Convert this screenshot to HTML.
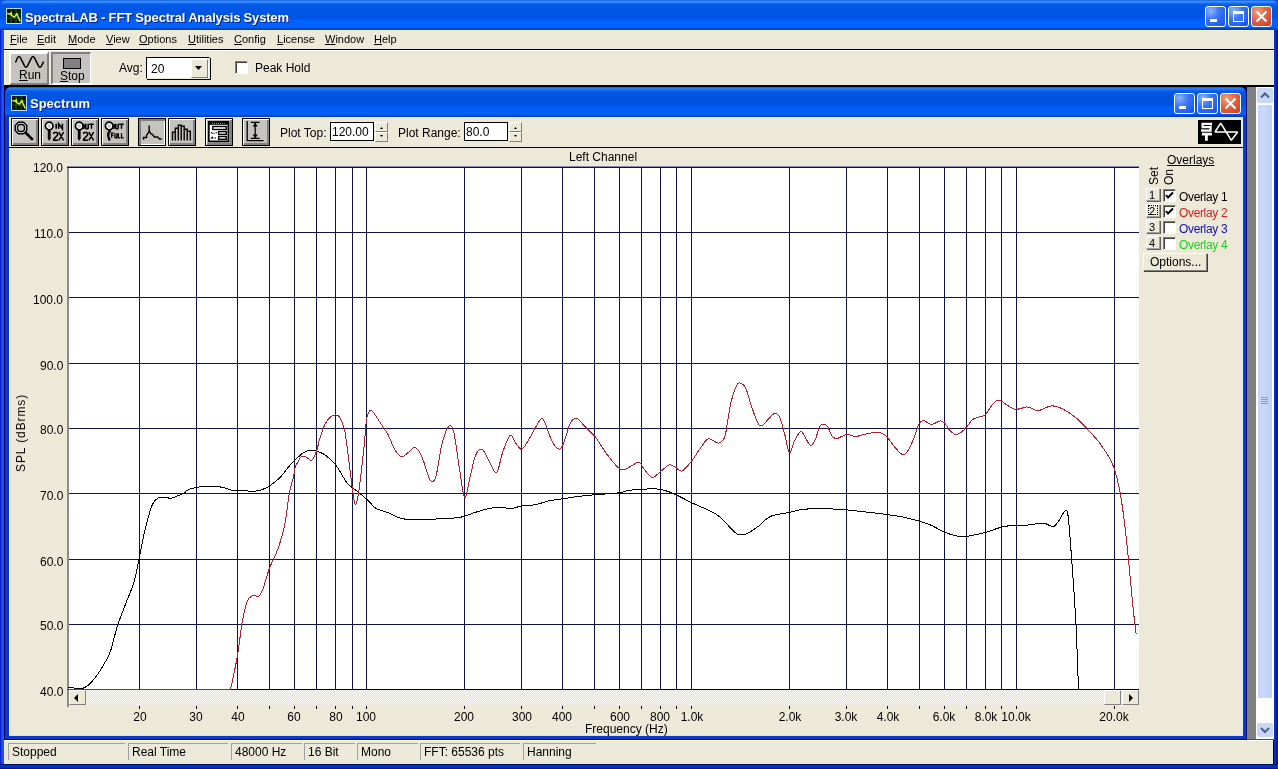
<!DOCTYPE html>
<html><head><meta charset="utf-8"><style>
*{margin:0;padding:0;box-sizing:border-box}
html,body{width:1278px;height:769px;overflow:hidden}
body{position:relative;background:#0A55E6;font-family:"Liberation Sans",sans-serif;font-size:12px;color:#000}
.a{position:absolute}
.t{position:absolute;white-space:nowrap;line-height:1;will-change:transform}
</style></head><body>
<div class="a" style="left:0;top:0;width:1278px;height:30px;border-radius:7px 7px 0 0;background:linear-gradient(#0047D5 0px,#3D95FF 1px,#3A8FFF 2px,#1C74F4 3px,#0A62E8 4px,#0058E6 6px,#0054E3 17px,#0058EE 19px,#0062FF 21px,#0064FF 27px,#0055EA 28px,#003DC0 29px,#003DC0 30px)"></div>
<div class="a" style="left:0;top:30px;width:4px;height:739px;background:linear-gradient(90deg,#0020C8 0,#0828D8 1px,#2A5AF0 2px,#2050E0 3px,#2050E0 4px)"></div>
<div class="a" style="left:1274px;top:30px;width:4px;height:739px;background:linear-gradient(90deg,#0030D0 0,#0030D0 2px,#001890 2px,#001890 4px)"></div>
<div class="a" style="left:0;top:764px;width:1278px;height:5px;background:linear-gradient(#001060 0,#001060 1px,#0030C0 1px,#0030C0 4px,#001890 4px)"></div>
<svg class="a" style="left:6px;top:8px" width="16" height="16" viewBox="0 0 16 16"><rect x="0" y="0" width="16" height="16" fill="#B8D8FF"/><rect x="1" y="1" width="14" height="14" fill="#061806"/><path d="M1,6 H15 M1,10 H15 M5,1 V15 M10,1 V15" stroke="#1F5A10" stroke-width="1"/><path d="M1.3,5.4 L3.9,6.2 L5.2,4.9 L5.4,7.3 L8.3,9.1 L10.9,5.7 L11.9,8.3 L14.3,13.5" stroke="#E0F040" stroke-width="1.5" fill="none"/></svg>
<div class="t" style="left:25px;top:11px;font-size:13px;letter-spacing:-0.18px;font-weight:bold;color:#fff;text-shadow:1px 1px 0 #0A1E7A">SpectraLAB - FFT Spectral Analysis System</div>
<div class="a" style="left:1205px;top:6px;width:21px;height:21px;border:1px solid #fff;border-radius:3px;background:radial-gradient(circle at 25% 20%,#8CB4FF 0%,#3C78F4 40%,#1F5DEB 80%,#1848D0 100%)"></div><div class="a" style="left:1210px;top:19px;width:7px;height:3px;background:#fff"></div>
<div class="a" style="left:1228px;top:6px;width:21px;height:21px;border:1px solid #fff;border-radius:3px;background:radial-gradient(circle at 25% 20%,#8CB4FF 0%,#3C78F4 40%,#1F5DEB 80%,#1848D0 100%)"></div><div class="a" style="left:1233px;top:11px;width:11px;height:11px;border:1px solid #fff;border-top-width:3px"></div>
<div class="a" style="left:1251px;top:6px;width:21px;height:21px;border:1px solid #fff;border-radius:3px;background:radial-gradient(circle at 30% 25%,#F4A07E 0%,#E2623F 45%,#C8401F 100%)"></div><svg class="a" style="left:1251px;top:6px" width="21" height="21"><path d="M5.5,5.5 L15.5,15.5 M15.5,5.5 L5.5,15.5" stroke="#fff" stroke-width="2"/></svg>
<div class="a" style="left:4px;top:30px;width:1270px;height:19px;background:#ECE9D8;border-top:1px solid #F4F3EC"></div>
<div class="a" style="left:4px;top:49px;width:1270px;height:1px;background:#000"></div>
<div class="t" style="left:10px;top:34px;font-size:11px"><u>F</u>ile</div>
<div class="t" style="left:37px;top:34px;font-size:11px"><u>E</u>dit</div>
<div class="t" style="left:68px;top:34px;font-size:11px"><u>M</u>ode</div>
<div class="t" style="left:106px;top:34px;font-size:11px"><u>V</u>iew</div>
<div class="t" style="left:139px;top:34px;font-size:11px"><u>O</u>ptions</div>
<div class="t" style="left:188px;top:34px;font-size:11px"><u>U</u>tilities</div>
<div class="t" style="left:234px;top:34px;font-size:11px"><u>C</u>onfig</div>
<div class="t" style="left:277px;top:34px;font-size:11px"><u>L</u>icense</div>
<div class="t" style="left:325px;top:34px;font-size:11px"><u>W</u>indow</div>
<div class="t" style="left:374px;top:34px;font-size:11px"><u>H</u>elp</div>
<div class="a" style="left:4px;top:50px;width:1270px;height:35px;background:#ECE9D8;border-top:1px solid #fff;border-left:1px solid #fff"></div>
<div class="a" style="left:4px;top:85px;width:1270px;height:2px;background:#000"></div>
<div class="a" style="left:9px;top:51px;width:40px;height:34px;background:#C4C3BE;border-top:3px solid #fff;border-left:2px solid #fff;border-bottom:2px solid #808080;border-right:2px solid #808080"></div>
<svg class="a" style="left:0;top:0" width="50" height="70"><path d="M15.5,62.5 L17.5,57.8 Q19,55.2 20.5,57.8 L24.5,65.8 Q26,68.6 27.5,65.8 L31.5,57.8 Q33,55.2 34.5,57.8 L38.5,65.8 Q40,68.6 41.5,65.8 L43.6,61.6" stroke="#000" stroke-width="1.5" fill="none"/></svg>
<div class="t" style="left:19px;top:69px;font-size:12px"><u>R</u>un</div>
<div class="a" style="left:51px;top:52px;width:40px;height:33px;background:#C4C3BE;border-top:2px solid #808080;border-left:2px solid #808080;border-bottom:2px solid #fff;border-right:1px solid #fff"></div>
<div class="a" style="left:63px;top:58px;width:18px;height:11px;background:#808080;border:1px solid #000"></div>
<div class="t" style="left:60px;top:70px;font-size:12px"><u>S</u>top</div>
<div class="t" style="left:119px;top:62px;font-size:12px">Avg:</div>
<div class="a" style="left:146px;top:57px;width:64px;height:22px;background:#fff;border:1px solid #000;border-right-color:#ECE9D8;border-bottom-color:#ECE9D8;box-shadow:1px 1px 0 #000"></div>
<div class="t" style="left:151px;top:63px;font-size:12px">20</div>
<div class="a" style="left:191px;top:59px;width:17px;height:19px;background:#ECE9D8;border-top:1px solid #fff;border-left:1px solid #fff;border-bottom:1px solid #808080;border-right:1px solid #808080"></div>
<svg class="a" style="left:195px;top:66px" width="9" height="6"><path d="M0,0 H7 L3.5,4 Z" fill="#000"/></svg>
<div class="a" style="left:235px;top:61px;width:13px;height:13px;background:#fff;border-top:1px solid #808080;border-left:1px solid #808080;border-bottom:1px solid #fff;border-right:1px solid #fff;box-shadow:inset 1px 1px 0 #404040"></div>
<div class="t" style="left:255px;top:62px;font-size:12px">Peak Hold</div>
<div class="a" style="left:4px;top:87px;width:1270px;height:652px;background:#808080;border-left:1px solid #000040"></div>
<div class="a" style="left:4px;top:87px;width:1243px;height:10px;background:#000040"></div>
<div class="a" style="left:5px;top:87px;width:1242px;height:653px;background:#0A38C8;border-radius:7px 7px 0 0;border-right:1px solid #001070;border-bottom:1px solid #000060"></div>
<div class="a" style="left:4px;top:87px;width:1px;height:653px;background:#000060"></div>
<div class="a" style="left:5px;top:87px;width:1241px;height:30px;border-radius:6px 6px 0 0;background:linear-gradient(#0A50E0 0px,#2C7CF8 1px,#2A78F4 2px,#1C6CF0 3px,#0A5EE8 4px,#0056E4 6px,#0052E0 17px,#0056EA 19px,#005EF8 21px,#0060FA 27px,#0050E0 28px,#0040C0 29px,#0040C0 30px)"></div>
<svg class="a" style="left:11px;top:95px" width="16" height="16" viewBox="0 0 16 16"><rect x="0" y="0" width="16" height="16" fill="#B8D8FF"/><rect x="1" y="1" width="14" height="14" fill="#061806"/><path d="M1,6 H15 M1,10 H15 M5,1 V15 M10,1 V15" stroke="#1F5A10" stroke-width="1"/><path d="M1.3,5.4 L3.9,6.2 L5.2,4.9 L5.4,7.3 L8.3,9.1 L10.9,5.7 L11.9,8.3 L14.3,13.5" stroke="#E0F040" stroke-width="1.5" fill="none"/></svg>
<div class="t" style="left:30px;top:97px;font-size:13px;font-weight:bold;color:#fff;text-shadow:1px 1px 0 #0A1E7A">Spectrum</div>
<div class="a" style="left:1174px;top:93px;width:21px;height:21px;border:1px solid #fff;border-radius:3px;background:radial-gradient(circle at 25% 20%,#8CB4FF 0%,#3C78F4 40%,#1F5DEB 80%,#1848D0 100%)"></div><div class="a" style="left:1179px;top:106px;width:7px;height:3px;background:#fff"></div>
<div class="a" style="left:1197px;top:93px;width:21px;height:21px;border:1px solid #fff;border-radius:3px;background:radial-gradient(circle at 25% 20%,#8CB4FF 0%,#3C78F4 40%,#1F5DEB 80%,#1848D0 100%)"></div><div class="a" style="left:1202px;top:98px;width:11px;height:11px;border:1px solid #fff;border-top-width:3px"></div>
<div class="a" style="left:1220px;top:93px;width:21px;height:21px;border:1px solid #fff;border-radius:3px;background:radial-gradient(circle at 30% 25%,#F4A07E 0%,#E2623F 45%,#C8401F 100%)"></div><svg class="a" style="left:1220px;top:93px" width="21" height="21"><path d="M5.5,5.5 L15.5,15.5 M15.5,5.5 L5.5,15.5" stroke="#fff" stroke-width="2"/></svg>
<div class="a" style="left:9px;top:117px;width:1234px;height:619px;background:#ECE9D8;border-left:1px solid #E0F0FF;border-right:1px solid #E0F0FF;border-bottom:1px solid #D0E0F0"></div>
<div class="a" style="left:9px;top:147px;width:1234px;height:1px;background:#000"></div>
<div class="a" style="left:11px;top:118px;width:28px;height:28px;border:1px solid #000;background:#C4C3BE;box-shadow:inset 1px 1px 0 #fff,inset -2px -2px 0 #808080"></div>
<div class="a" style="left:41px;top:118px;width:28px;height:28px;border:1px solid #000;background:#C4C3BE;box-shadow:inset 1px 1px 0 #fff,inset -2px -2px 0 #808080"></div>
<div class="a" style="left:71px;top:118px;width:28px;height:28px;border:1px solid #000;background:#C4C3BE;box-shadow:inset 1px 1px 0 #fff,inset -2px -2px 0 #808080"></div>
<div class="a" style="left:101px;top:118px;width:28px;height:28px;border:1px solid #000;background:#C4C3BE;box-shadow:inset 1px 1px 0 #fff,inset -2px -2px 0 #808080"></div>
<div class="a" style="left:168px;top:118px;width:28px;height:28px;border:1px solid #000;background:#C4C3BE;box-shadow:inset 1px 1px 0 #fff,inset -2px -2px 0 #808080"></div>
<div class="a" style="left:205px;top:118px;width:28px;height:28px;border:1px solid #000;background:#C4C3BE;box-shadow:inset 1px 1px 0 #fff,inset -2px -2px 0 #808080"></div>
<div class="a" style="left:242px;top:118px;width:28px;height:28px;border:1px solid #000;background:#C4C3BE;box-shadow:inset 1px 1px 0 #fff,inset -2px -2px 0 #808080"></div>
<div class="a" style="left:138px;top:118px;width:28px;height:28px;border:1px solid #000;background:#C4C3BE;box-shadow:inset 2px 2px 0 #808080,inset -1px -1px 0 #fff"></div>
<svg class="a" style="left:11px;top:118px" width="28" height="28"><path d="M7.5,4.3 H12.5 L15.7,7.5 V12.5 L12.5,15.7 H7.5 L4.3,12.5 V7.5Z" fill="#fff" stroke="#000" stroke-width="1.5"/><path d="M8.3,6.5 H11.7 L13.5,8.3 V11.7 L11.7,13.5 H8.3 L6.5,11.7 V8.3Z" fill="#C4C3BE" stroke="#000" stroke-width="1.4"/><path d="M14.5,14.5 L21.8,21.8" stroke="#000" stroke-width="2.6"/></svg>
<svg class="a" style="left:41px;top:118px" width="28" height="28"><circle cx="8.2" cy="8" r="3.8" fill="#fff" stroke="#000" stroke-width="1.7"/><circle cx="8.2" cy="8" r="1.9" fill="#C8C8C8"/><path d="M6.8,12 H9.6 V20.5 L8.2,23 L6.8,20.5Z" fill="#000"/><path d="M15.2,5.8 V10.8 M17.6,10.8 V5.8 L21.4,10.8 V5.8" stroke="#000" stroke-width="1.6" fill="none"/><path d="M12.2,15.8 L13.4,14.4 H15.6 L16.6,15.6 V17 L12.6,21.4 V22.2 H17 M17.8,14.2 L22.6,22.4 M22.6,14.2 L17.8,22.4" stroke="#000" stroke-width="1.5" fill="none"/></svg>
<svg class="a" style="left:71px;top:118px" width="28" height="28"><circle cx="8.2" cy="8" r="3.8" fill="#fff" stroke="#000" stroke-width="1.7"/><circle cx="8.2" cy="8" r="1.9" fill="#C8C8C8"/><path d="M6.8,12 H9.6 V20.5 L8.2,23 L6.8,20.5Z" fill="#000"/><path d="M11.6,6.6 H12.8 L13.2,7 V9.8 L12.8,10.3 H11.6 M14.8,5.8 V10.2 L15.3,10.7 H16.7 L17.2,10.2 V5.8 M18.2,6.2 H22.8 M20.5,6.2 V10.8" stroke="#000" stroke-width="1.5" fill="none"/><path d="M12.2,15.8 L13.4,14.4 H15.6 L16.6,15.6 V17 L12.6,21.4 V22.2 H17 M17.8,14.2 L22.6,22.4 M22.6,14.2 L17.8,22.4" stroke="#000" stroke-width="1.5" fill="none"/></svg>
<svg class="a" style="left:101px;top:118px" width="28" height="28"><circle cx="8.2" cy="8" r="3.8" fill="#fff" stroke="#000" stroke-width="1.7"/><circle cx="8.2" cy="8" r="1.9" fill="#C8C8C8"/><path d="M9.6,12.4 Q6.6,14.5 7.4,18.5 L8.6,22.5" stroke="#000" stroke-width="2.4" fill="none"/><path d="M11.6,6.6 H12.8 L13.2,7 V9.8 L12.8,10.3 H11.6 M14.8,5.8 V10.2 L15.3,10.7 H16.7 L17.2,10.2 V5.8 M18.2,6.2 H22.8 M20.5,6.2 V10.8" stroke="#000" stroke-width="1.5" fill="none"/><path d="M10.6,19.8 V15.2 H12.8 M10.6,17.3 H12.4 M13.9,15.2 V19.4 L14.3,19.8 H15.5 L15.9,19.4 V15.2 M17.3,15.2 V19.8 H19.3 M20.5,15.2 V19.8 H22.8" stroke="#000" stroke-width="1.3" fill="none"/></svg>
<svg class="a" style="left:138px;top:118px" width="28" height="28"><path d="M5.5,21.8 V19.5 H8.5 V17.5 L10.2,14.8 L11.2,12.8 V7.6 M11.2,12.5 L12.6,15.5 L14.6,16.6 L16.4,19 H19.6 L21.6,21 H23.6" stroke="#000" stroke-width="1.4" fill="none"/></svg>
<svg class="a" style="left:168px;top:118px" width="28" height="28"><path d="M4.5,22.5 V14.3 H7.3 V10.3 H10.3 V7.3 H13.2 V8.2 H16.2 V11.3 H19.2 V13.1 H22.3 V22.5 M7.3,10.3 V22.5 M10.3,7.3 V22.5 M13.2,8.2 V22.5 M16.2,11.3 V22.5 M19.2,13.1 V22.5" stroke="#000" stroke-width="1.4" fill="none"/></svg>
<svg class="a" style="left:205px;top:118px" width="28" height="28"><rect x="3.8" y="3.8" width="19.6" height="19.6" fill="#fff" stroke="#000" stroke-width="1.8"/><rect x="3.8" y="3.8" width="19.6" height="3" fill="#000"/><path d="M7,5.3 H19.5" stroke="#aaa" stroke-width="1" stroke-dasharray="1,1"/><rect x="7.8" y="8.5" width="13.4" height="3" fill="#fff" stroke="#000" stroke-width="1.4"/><rect x="13.6" y="13.6" width="7.6" height="2.8" fill="#fff" stroke="#000" stroke-width="1.4"/><rect x="13.6" y="18.5" width="7.6" height="2.8" fill="#fff" stroke="#000" stroke-width="1.4"/><path d="M6.2,14.2 L7.6,15.6 M9,14.8 V15.8 M10.6,14.6 H11.8 M6.2,20.6 L7.2,19.2 L8.2,20.6 M10.2,19.2 V20.8" stroke="#000" stroke-width="1.1" fill="none"/></svg>
<svg class="a" style="left:242px;top:118px" width="28" height="28"><path d="M5.2,3 V22.6 H21.6 M8.8,4.4 H17.6 M8.8,20.4 H17.6 M13.2,5 V20" stroke="#000" stroke-width="1.3" fill="none"/><path d="M10.6,8.6 L13.2,4.8 L15.8,8.6Z M10.6,16.4 L13.2,20.2 L15.8,16.4Z" fill="#000"/></svg>

<div class="t" style="left:280px;top:127px;font-size:12px">Plot Top:</div>
<div class="a" style="left:330px;top:122px;width:44px;height:19px;background:#fff;border:1px solid #000"></div>
<div class="t" style="left:332px;top:126px;font-size:12px">120.00</div>
<div class="a" style="left:375px;top:122px;width:13px;height:10px;background:#ECE9D8;border-top:1px solid #fff;border-left:1px solid #fff;border-bottom:1px solid #808080;border-right:1px solid #808080"></div><div class="a" style="left:375px;top:132px;width:13px;height:10px;background:#ECE9D8;border-top:1px solid #fff;border-left:1px solid #fff;border-bottom:1px solid #808080;border-right:1px solid #808080"></div><svg class="a" style="left:375px;top:124px" width="13" height="18"><path d="M5,5 L6.5,3 L8,5Z M5,11 H8 L6.5,13Z" fill="#000"/></svg>
<div class="t" style="left:398px;top:127px;font-size:12px">Plot Range:</div>
<div class="a" style="left:464px;top:122px;width:44px;height:19px;background:#fff;border:1px solid #000"></div>
<div class="t" style="left:466px;top:126px;font-size:12px">80.0</div>
<div class="a" style="left:509px;top:122px;width:13px;height:10px;background:#ECE9D8;border-top:1px solid #fff;border-left:1px solid #fff;border-bottom:1px solid #808080;border-right:1px solid #808080"></div><div class="a" style="left:509px;top:132px;width:13px;height:10px;background:#ECE9D8;border-top:1px solid #fff;border-left:1px solid #fff;border-bottom:1px solid #808080;border-right:1px solid #808080"></div><svg class="a" style="left:509px;top:124px" width="13" height="18"><path d="M5,5 L6.5,3 L8,5Z M5,11 H8 L6.5,13Z" fill="#000"/></svg>
<svg class="a" style="left:1198px;top:120px" width="43" height="24"><rect width="43" height="24" fill="#000"/><path d="M13,5.4 V3.8 H4.6 V7.2 H12.6 V10.6 H4.2 V9.2" stroke="#fff" stroke-width="2.2" fill="none"/><path d="M3.9,14.2 H13.9 M8.4,14.2 V20.8" stroke="#fff" stroke-width="2.8" fill="none"/><path d="M17,12 L22.7,3.2 L28.2,12 L33.3,20.3 L39.7,12 Z" stroke="#fff" stroke-width="1.5" fill="none" stroke-linejoin="bevel"/></svg>
<svg class="a" style="left:0;top:0" width="1278" height="769" viewBox="0 0 1278 769"><rect x="69" y="167" width="1070" height="522" fill="#fff"/><path d="M139.5,167V689M196.5,167V689M237.5,167V689M269.5,167V689M294.5,167V689M316.5,167V689M335.5,167V689M352.5,167V689M366.5,167V689M464.5,167V689M521.5,167V689M562.5,167V689M594.5,167V689M619.5,167V689M641.5,167V689M660.5,167V689M676.5,167V689M691.5,167V689M789.5,167V689M846.5,167V689M887.5,167V689M919.5,167V689M944.5,167V689M966.5,167V689M985.5,167V689M1001.5,167V689M1016.5,167V689M1114.5,167V689M69,232.5H1139M69,297.5H1139M69,363.5H1139M69,428.5H1139M69,493.5H1139M69,559.5H1139M69,624.5H1139" stroke="#12124A" stroke-width="1" fill="none"/><path d="M139.5,706V709M196.5,706V709M237.5,706V709M269.5,706V709M294.5,706V709M316.5,706V709M335.5,706V709M352.5,706V709M366.5,706V709M464.5,706V709M521.5,706V709M562.5,706V709M594.5,706V709M619.5,706V709M641.5,706V709M660.5,706V709M676.5,706V709M691.5,706V709M789.5,706V709M846.5,706V709M887.5,706V709M919.5,706V709M944.5,706V709M966.5,706V709M985.5,706V709M1001.5,706V709M1016.5,706V709M1114.5,706V709" stroke="#000" stroke-width="1"/><rect x="67" y="167" width="2" height="540" fill="#8C8A84"/><rect x="67" y="166" width="1072" height="1" fill="#8888B0"/><rect x="67" y="167" width="1072" height="1" fill="#10105A"/><rect x="69" y="689" width="1070" height="1" fill="#000"/><path d="M67.9,687.2C68.9,687.3 71.6,687.7 73.8,688.0C76.0,688.3 78.7,689.4 81.1,688.9C83.5,688.4 85.7,687.4 88.4,685.1C91.1,682.8 94.5,678.5 97.2,674.9C99.9,671.2 102.3,667.1 104.5,663.2C106.7,659.3 108.2,657.8 110.4,651.4C112.6,645.0 115.0,633.4 117.7,625.1C120.4,616.8 123.8,608.8 126.5,601.7C129.2,594.6 131.7,589.8 133.8,582.7C135.9,575.6 137.3,567.3 139.0,559.3C140.7,551.2 142.4,541.5 144.0,534.4C145.6,527.3 146.9,521.9 148.4,516.8C149.9,511.7 151.1,506.9 152.8,503.7C154.5,500.5 156.4,498.9 158.6,497.8C160.8,496.7 164.0,497.1 166.0,497.2C168.0,497.3 168.5,498.6 170.4,498.4C172.3,498.2 175.3,496.7 177.7,495.8C180.1,494.9 183.4,493.7 185.0,492.8C186.6,491.9 185.1,491.2 187.0,490.3C188.9,489.4 193.3,488.0 196.4,487.4C199.5,486.8 202.5,486.6 205.8,486.4C209.1,486.2 213.2,486.1 216.3,486.4C219.4,486.6 221.8,487.2 224.5,487.9C227.2,488.5 229.2,489.8 232.7,490.3C236.2,490.8 241.9,490.8 245.6,490.9C249.3,491.0 252.2,491.3 254.9,491.1C257.6,490.9 259.5,490.6 261.9,489.7C264.3,488.8 266.6,487.9 269.5,486.0C272.4,484.1 276.9,480.5 279.5,478.0C282.1,475.5 283.4,473.4 285.3,471.0C287.2,468.6 289.2,466.0 291.2,463.9C293.2,461.8 295.0,460.1 297.1,458.1C299.2,456.2 301.6,453.5 304.1,452.2C306.6,450.9 309.9,450.2 312.3,450.1C314.7,450.0 316.4,450.9 318.5,451.7C320.6,452.5 322.4,453.0 325.2,455.1C328.0,457.2 331.7,459.8 335.4,464.4C339.1,469.0 343.5,478.5 347.2,483.0C350.9,487.5 354.0,488.7 357.4,491.5C360.8,494.3 364.4,497.1 367.5,499.9C370.6,502.7 372.6,506.3 376.0,508.4C379.4,510.5 382.7,510.8 387.8,512.6C392.9,514.4 396.0,518.5 406.4,519.4C416.8,520.3 440.4,518.8 450.0,518.3C459.6,517.8 459.8,517.4 463.7,516.5C467.6,515.6 469.9,514.1 473.7,512.9C477.5,511.7 482.5,510.1 486.4,509.2C490.3,508.3 493.1,507.5 497.3,507.4C501.6,507.2 507.6,508.6 511.9,508.3C516.1,508.0 518.9,506.2 522.8,505.6C526.7,505.0 531.2,505.5 535.5,504.7C539.8,503.9 543.7,502.0 548.3,501.0C552.9,500.0 558.0,499.6 562.9,498.8C567.8,498.1 571.9,497.2 577.4,496.5C582.9,495.8 588.6,495.3 595.6,494.7C602.6,494.1 613.9,493.5 619.3,492.8C624.7,492.1 624.3,491.1 628.2,490.5C632.1,489.9 637.6,489.4 642.8,489.2C647.9,489.0 654.0,488.4 659.1,489.2C664.2,489.9 668.2,491.4 673.7,493.7C679.2,496.0 684.9,499.5 691.9,502.8C698.9,506.1 709.8,510.3 715.6,513.8C721.4,517.3 722.9,520.4 726.5,523.8C730.1,527.2 734.1,532.4 737.4,534.1C740.7,535.8 742.9,535.2 746.5,533.8C750.1,532.4 755.3,528.5 759.3,525.6C763.2,522.7 765.2,518.7 770.2,516.5C775.2,514.3 783.2,513.6 789.1,512.4C795.0,511.2 797.8,509.7 805.5,509.1C813.2,508.6 826.4,508.7 835.5,509.1C844.6,509.5 851.5,510.4 860.1,511.3C868.8,512.2 879.7,513.5 887.4,514.6C895.1,515.7 899.7,516.2 906.5,517.8C913.3,519.4 922.0,521.7 928.4,524.1C934.8,526.5 939.7,530.2 944.7,532.3C949.7,534.3 954.8,535.7 958.4,536.4C962.0,537.1 962.0,537.1 966.6,536.4C971.2,535.7 979.3,534.0 985.7,532.3C992.1,530.6 998.4,527.4 1004.8,526.3C1011.2,525.2 1017.5,526.0 1023.9,525.5C1030.3,525.0 1038.4,523.0 1043.3,523.2C1048.2,523.4 1050.5,527.2 1053.2,526.6C1056.0,526.0 1057.9,521.9 1059.8,519.3C1061.7,516.7 1063.4,511.6 1064.8,511.0C1066.2,510.4 1067.0,508.6 1068.1,516.0C1069.2,523.5 1070.1,538.2 1071.4,555.7C1072.7,573.2 1074.6,598.9 1075.8,621.1C1077.0,643.3 1078.0,677.7 1078.5,689.0" stroke="#000" stroke-width="1" fill="none" shape-rendering="crispEdges"/><path d="M67,689.5H230.6C231.7,683.7 235.2,668.8 237.2,657.2C239.2,645.6 240.9,628.7 242.7,619.2C244.5,609.7 246.1,604.1 247.8,600.2C249.5,596.3 251.0,596.5 252.9,595.8C254.8,595.1 257.5,597.0 259.2,595.8C260.9,594.6 261.3,593.2 263.0,588.7C264.7,584.2 266.9,575.2 269.4,568.5C271.9,561.8 275.7,555.4 278.2,548.2C280.7,541.0 282.7,534.6 284.6,525.4C286.5,516.2 287.9,501.3 289.4,493.2C290.9,485.1 292.5,481.3 293.5,476.8C294.5,472.3 294.7,468.5 295.3,466.3C295.9,464.1 296.0,465.1 297.1,463.4C298.2,461.7 300.1,457.3 301.7,456.3C303.2,455.3 304.7,456.5 306.4,457.2C308.1,457.9 310.0,461.3 311.7,460.4C313.4,459.4 315.0,455.3 316.4,451.5C317.8,447.7 318.6,442.0 320.1,437.4C321.6,432.8 323.5,427.2 325.2,423.8C326.9,420.4 328.6,418.6 330.3,417.1C332.0,415.6 333.8,415.0 335.4,415.0C336.9,415.0 338.1,414.5 339.6,417.1C341.2,419.7 343.1,423.3 344.7,430.6C346.2,437.9 347.6,451.4 348.9,461.0C350.2,470.6 351.2,480.9 352.3,488.1C353.4,495.3 354.2,503.9 355.3,504.2C356.4,504.5 357.5,499.5 359.0,489.8C360.5,480.1 362.8,457.7 364.1,445.8C365.4,433.9 365.6,424.6 366.7,418.7C367.8,412.8 369.1,410.3 370.9,410.3C372.7,410.3 375.4,415.6 377.6,418.7C379.9,421.8 382.6,426.1 384.4,428.9C386.2,431.7 386.9,432.3 388.6,435.7C390.3,439.1 392.5,445.7 394.6,449.2C396.7,452.7 399.1,456.2 401.3,456.8C403.6,457.4 405.8,454.2 408.1,452.6C410.4,451.1 412.6,446.9 414.9,447.5C417.1,448.1 419.4,451.2 421.6,456.0C423.9,460.8 426.7,472.1 428.4,476.3C430.1,480.5 430.5,481.3 431.8,481.3C433.1,481.3 434.3,482.5 436.0,476.3C437.7,470.1 439.8,452.4 441.9,444.1C444.0,435.8 446.7,428.4 448.7,426.4C450.7,424.4 452.1,425.6 453.8,432.3C455.5,439.0 457.3,455.5 459.1,466.4C460.9,477.2 462.8,495.6 464.6,497.4C466.4,499.2 468.2,484.4 470.0,477.4C471.8,470.4 473.5,460.2 475.5,455.5C477.5,450.8 479.8,448.6 481.9,449.2C484.0,449.8 485.8,455.3 488.2,459.2C490.6,463.1 494.0,474.0 496.4,472.8C498.8,471.6 500.5,458.1 502.8,451.9C505.1,445.7 508.0,437.0 510.1,435.5C512.2,434.0 513.5,440.5 515.5,442.8C517.5,445.1 519.5,450.1 521.9,449.2C524.3,448.3 527.1,442.2 530.1,437.3C533.1,432.4 537.7,422.6 540.1,420.0C542.5,417.4 542.6,418.4 544.6,421.9C546.6,425.4 549.5,436.4 551.9,441.0C554.3,445.6 557.2,448.9 559.2,449.2C561.2,449.5 562.0,447.1 563.8,442.8C565.6,438.6 568.0,427.8 570.1,423.7C572.2,419.6 574.1,417.8 576.5,418.2C578.9,418.6 581.5,423.2 584.7,426.4C587.9,429.6 592.0,432.8 595.6,437.3C599.2,441.9 602.6,448.5 606.5,453.7C610.4,458.9 615.9,465.7 619.1,468.3C622.3,470.9 623.4,469.7 625.5,469.2C627.6,468.7 629.5,466.7 631.8,465.5C634.1,464.3 637.3,461.9 639.1,462.2C640.9,462.5 640.7,464.8 642.8,467.3C644.9,469.8 649.0,476.6 651.9,477.4C654.8,478.2 657.2,474.0 660.1,471.9C663.0,469.8 666.6,465.8 669.2,465.0C671.8,464.2 673.4,466.3 675.5,467.3C677.6,468.3 679.3,471.9 681.9,471.0C684.5,470.1 687.8,465.8 691.0,461.9C694.2,457.9 698.1,451.2 701.0,447.3C703.9,443.4 705.6,439.3 708.5,438.6C711.4,437.9 715.6,443.4 718.3,443.2C721.0,443.0 723.2,440.4 724.6,437.6C726.0,434.8 725.7,432.2 726.8,426.3C727.9,420.4 729.3,409.2 731.0,402.4C732.7,395.5 735.2,388.4 736.8,385.2C738.4,382.0 739.1,382.7 740.6,383.2C742.1,383.7 744.1,384.9 745.8,388.3C747.5,391.7 748.7,398.1 750.7,403.8C752.7,409.6 755.8,419.2 757.7,422.8C759.6,426.4 760.4,426.1 762.0,425.6C763.6,425.1 765.5,422.0 767.6,420.0C769.7,418.0 772.6,413.9 774.6,413.4C776.6,412.9 778.0,413.9 779.6,417.2C781.2,420.5 782.9,427.5 784.5,433.4C786.1,439.3 787.8,451.1 789.4,452.4C791.0,453.7 792.5,444.6 794.4,441.1C796.3,437.6 799.0,432.0 800.7,431.3C802.5,430.6 803.2,434.5 804.9,436.9C806.5,439.2 808.8,445.0 810.6,445.4C812.4,445.8 814.0,442.2 815.5,439.0C817.0,435.8 818.3,428.8 819.7,426.3C821.1,423.8 822.6,424.2 823.9,424.2C825.2,424.2 826.2,424.4 827.5,426.3C828.8,428.2 830.2,433.4 831.7,435.5C833.2,437.6 834.1,438.8 836.6,438.6C839.1,438.4 843.5,434.9 846.5,434.5C849.5,434.1 852.6,436.3 854.9,436.5C857.1,436.7 858.0,436.1 860.0,435.6C862.0,435.2 864.4,434.3 867.0,433.8C869.6,433.3 872.9,432.4 875.5,432.4C878.1,432.3 880.5,432.6 882.5,433.5C884.5,434.4 885.4,435.3 887.5,437.7C889.6,440.1 892.7,444.8 895.2,447.6C897.7,450.4 900.3,453.7 902.3,454.4C904.3,455.1 905.3,454.3 907.2,451.8C909.1,449.3 911.6,443.6 913.5,439.2C915.4,434.8 916.9,428.2 918.5,425.1C920.1,422.0 921.2,420.7 923.4,420.6C925.6,420.5 929.0,424.4 931.8,424.4C934.6,424.4 938.1,420.9 940.3,420.8C942.5,420.7 943.6,422.1 945.2,423.7C946.8,425.3 948.3,428.9 950.1,430.7C951.9,432.5 953.9,434.4 955.8,434.6C957.7,434.8 959.5,433.5 961.4,432.1C963.3,430.8 965.1,428.6 967.0,426.5C968.9,424.4 970.6,421.0 972.7,419.4C974.8,417.8 977.6,417.7 979.7,416.9C981.8,416.1 983.3,416.6 985.4,414.5C987.5,412.4 990.4,407.0 992.4,404.6C994.4,402.2 995.8,401.0 997.3,400.4C998.8,399.8 1000.0,400.4 1001.5,401.1C1003.0,401.8 1004.5,403.3 1006.5,404.6C1008.5,405.9 1011.4,408.2 1013.5,408.9C1015.6,409.6 1017.1,409.2 1019.2,408.9C1021.3,408.6 1024.3,407.2 1026.2,407.0C1028.1,406.8 1028.4,407.3 1030.4,407.9C1032.4,408.5 1034.8,410.9 1038.3,410.6C1041.8,410.3 1047.4,406.1 1051.5,405.9C1055.6,405.7 1058.9,407.1 1063.1,409.2C1067.2,411.2 1072.2,414.8 1076.4,418.2C1080.6,421.6 1084.1,425.7 1088.0,429.8C1091.9,433.9 1096.0,438.3 1099.6,443.0C1103.2,447.7 1107.0,453.6 1109.5,458.0C1112.0,462.4 1112.8,464.3 1114.5,469.5C1116.2,474.7 1117.8,480.5 1119.5,489.4C1121.2,498.2 1122.8,509.3 1124.5,522.6C1126.2,535.9 1128.0,555.2 1129.4,569.0C1130.8,582.8 1131.7,594.6 1132.8,605.4C1133.9,616.2 1135.5,628.9 1136.1,633.6" stroke="#B01E30" stroke-width="1" fill="none" shape-rendering="crispEdges"/></svg>
<div class="a" style="left:69px;top:690px;width:1070px;height:15px;background:repeating-conic-gradient(#FAF8F2 0 25%,#E4E2DA 0 50%) 0 0/2px 2px"></div>
<div class="a" style="left:69px;top:690px;width:17px;height:15px;background:#ECE9D8;border-top:1px solid #fff;border-left:1px solid #fff;border-bottom:1px solid #808080;border-right:1px solid #808080"></div>
<svg class="a" style="left:69px;top:690px" width="17" height="16"><path d="M5,8 L9,4 V12Z" fill="#000"/></svg>
<div class="a" style="left:1104px;top:690px;width:17px;height:15px;background:#ECE9D8;border-top:1px solid #fff;border-left:1px solid #fff;border-bottom:1px solid #808080;border-right:1px solid #808080"></div>
<div class="a" style="left:1122px;top:690px;width:17px;height:15px;background:#ECE9D8;border-top:1px solid #fff;border-left:1px solid #fff;border-bottom:1px solid #808080;border-right:1px solid #808080"></div>
<svg class="a" style="left:1122px;top:690px" width="17" height="16"><path d="M7,4 L11,8 L7,12Z" fill="#000"/></svg>
<div class="t" style="right:1215px;top:162px;font-size:12px">120.0</div>
<div class="t" style="right:1215px;top:228px;font-size:12px">110.0</div>
<div class="t" style="right:1215px;top:294px;font-size:12px">100.0</div>
<div class="t" style="right:1215px;top:360px;font-size:12px">90.0</div>
<div class="t" style="right:1215px;top:424px;font-size:12px">80.0</div>
<div class="t" style="right:1215px;top:490px;font-size:12px">70.0</div>
<div class="t" style="right:1215px;top:556px;font-size:12px">60.0</div>
<div class="t" style="right:1215px;top:620px;font-size:12px">50.0</div>
<div class="t" style="right:1215px;top:686px;font-size:12px">40.0</div>
<div class="t" style="left:110px;top:711px;width:60px;text-align:center;font-size:12px">20</div>
<div class="t" style="left:166px;top:711px;width:60px;text-align:center;font-size:12px">30</div>
<div class="t" style="left:208px;top:711px;width:60px;text-align:center;font-size:12px">40</div>
<div class="t" style="left:264px;top:711px;width:60px;text-align:center;font-size:12px">60</div>
<div class="t" style="left:306px;top:711px;width:60px;text-align:center;font-size:12px">80</div>
<div class="t" style="left:336px;top:711px;width:60px;text-align:center;font-size:12px">100</div>
<div class="t" style="left:434px;top:711px;width:60px;text-align:center;font-size:12px">200</div>
<div class="t" style="left:492px;top:711px;width:60px;text-align:center;font-size:12px">300</div>
<div class="t" style="left:532px;top:711px;width:60px;text-align:center;font-size:12px">400</div>
<div class="t" style="left:590px;top:711px;width:60px;text-align:center;font-size:12px">600</div>
<div class="t" style="left:630px;top:711px;width:60px;text-align:center;font-size:12px">800</div>
<div class="t" style="left:662px;top:711px;width:60px;text-align:center;font-size:12px">1.0k</div>
<div class="t" style="left:760px;top:711px;width:60px;text-align:center;font-size:12px">2.0k</div>
<div class="t" style="left:816px;top:711px;width:60px;text-align:center;font-size:12px">3.0k</div>
<div class="t" style="left:858px;top:711px;width:60px;text-align:center;font-size:12px">4.0k</div>
<div class="t" style="left:914px;top:711px;width:60px;text-align:center;font-size:12px">6.0k</div>
<div class="t" style="left:956px;top:711px;width:60px;text-align:center;font-size:12px">8.0k</div>
<div class="t" style="left:986px;top:711px;width:60px;text-align:center;font-size:12px">10.0k</div>
<div class="t" style="left:1084px;top:711px;width:60px;text-align:center;font-size:12px">20.0k</div>
<div class="t" style="left:569px;top:151px;font-size:12px">Left Channel</div>
<div class="t" style="left:585px;top:723px;font-size:12px">Frequency (Hz)</div>
<div class="t" style="left:21px;top:433px;font-size:12px;letter-spacing:0.9px;transform:translate(-50%,-50%) rotate(-90deg)">SPL (dBrms)</div>
<div class="t" style="left:1167px;top:154px;font-size:12px;text-decoration:underline">Overlays</div>
<div class="t" style="left:1154px;top:176px;font-size:12px;transform:translate(-50%,-50%) rotate(-90deg)">Set</div>
<div class="t" style="left:1169px;top:177px;font-size:12px;transform:translate(-50%,-50%) rotate(-90deg)">On</div>
<div class="a" style="left:1146px;top:188px;width:14px;height:13px;background:#ECE9D8;border-top:1px solid #fff;border-left:1px solid #fff;border-bottom:1px solid #A0A0A0;border-right:1px solid #A0A0A0;box-shadow:1px 1px 0 #606060"></div>
<div class="t" style="left:1149px;top:190px;font-size:11px">1</div>
<div class="a" style="left:1163px;top:189px;width:13px;height:13px;background:#fff;border-top:1px solid #808080;border-left:1px solid #808080;border-bottom:1px solid #fff;border-right:1px solid #fff;box-shadow:inset 1px 1px 0 #404040"></div>
<svg class="a" style="left:1163px;top:189px" width="13" height="13"><path d="M3,6 L5,8.5 L10,3.5" stroke="#000" stroke-width="2" fill="none"/></svg>
<div class="t" style="left:1179px;top:191px;font-size:12px;letter-spacing:-0.35px;color:#000">Overlay 1</div>
<div class="a" style="left:1146px;top:204px;width:14px;height:13px;background:#ECE9D8;border-top:1px solid #fff;border-left:1px solid #fff;border-bottom:1px solid #A0A0A0;border-right:1px solid #A0A0A0;box-shadow:1px 1px 0 #606060"></div>
<div class="t" style="left:1149px;top:206px;font-size:11px">2</div>
<div class="a" style="left:1148px;top:205px;width:10px;height:10px;border:1px dotted #000"></div>
<div class="a" style="left:1163px;top:205px;width:13px;height:13px;background:#fff;border-top:1px solid #808080;border-left:1px solid #808080;border-bottom:1px solid #fff;border-right:1px solid #fff;box-shadow:inset 1px 1px 0 #404040"></div>
<svg class="a" style="left:1163px;top:205px" width="13" height="13"><path d="M3,6 L5,8.5 L10,3.5" stroke="#000" stroke-width="2" fill="none"/></svg>
<div class="t" style="left:1179px;top:207px;font-size:12px;letter-spacing:-0.35px;color:#D02020">Overlay 2</div>
<div class="a" style="left:1146px;top:220px;width:14px;height:13px;background:#ECE9D8;border-top:1px solid #fff;border-left:1px solid #fff;border-bottom:1px solid #A0A0A0;border-right:1px solid #A0A0A0;box-shadow:1px 1px 0 #606060"></div>
<div class="t" style="left:1149px;top:222px;font-size:11px">3</div>
<div class="a" style="left:1163px;top:221px;width:13px;height:13px;background:#fff;border-top:1px solid #808080;border-left:1px solid #808080;border-bottom:1px solid #fff;border-right:1px solid #fff;box-shadow:inset 1px 1px 0 #404040"></div>
<div class="t" style="left:1179px;top:223px;font-size:12px;letter-spacing:-0.35px;color:#1010B0">Overlay 3</div>
<div class="a" style="left:1146px;top:236px;width:14px;height:13px;background:#ECE9D8;border-top:1px solid #fff;border-left:1px solid #fff;border-bottom:1px solid #A0A0A0;border-right:1px solid #A0A0A0;box-shadow:1px 1px 0 #606060"></div>
<div class="t" style="left:1149px;top:238px;font-size:11px">4</div>
<div class="a" style="left:1163px;top:237px;width:13px;height:13px;background:#fff;border-top:1px solid #808080;border-left:1px solid #808080;border-bottom:1px solid #fff;border-right:1px solid #fff;box-shadow:inset 1px 1px 0 #404040"></div>
<div class="t" style="left:1179px;top:239px;font-size:12px;letter-spacing:-0.35px;color:#20D020">Overlay 4</div>
<div class="a" style="left:1143px;top:253px;width:64px;height:18px;background:#ECE9D8;border-top:1px solid #fff;border-left:1px solid #fff;border-bottom:1px solid #808080;border-right:1px solid #808080;box-shadow:1px 1px 0 #404040"></div>
<div class="t" style="left:1150px;top:256px;font-size:12px">Options...</div>
<div class="a" style="left:1256px;top:87px;width:18px;height:652px;background:#FDFDFA"></div>
<div class="a" style="left:1257px;top:88px;width:16px;height:15px;border-radius:2px;background:#C8D6FA"></div>
<svg class="a" style="left:1257px;top:88px" width="16" height="15"><path d="M4,9.5 L8,5.5 L12,9.5" stroke="#4D6185" stroke-width="2" fill="none"/></svg>
<div class="a" style="left:1257px;top:104px;width:16px;height:595px;border-radius:2px;background:linear-gradient(90deg,#C6D4F8,#CAD8FC 40%,#B9D0FA);border:1px solid #FFF"></div>
<svg class="a" style="left:1261px;top:397px" width="8" height="8"><path d="M0,0.5H7M0,2.5H7M0,4.5H7M0,6.5H7" stroke="#8A9CC8" stroke-width="1"/></svg>
<div class="a" style="left:1257px;top:723px;width:16px;height:14px;border-radius:2px;background:#C8D6FA"></div>
<svg class="a" style="left:1257px;top:723px" width="16" height="14"><path d="M4,5 L8,9 L12,5" stroke="#4D6185" stroke-width="2" fill="none"/></svg>
<div class="a" style="left:4px;top:740px;width:1270px;height:24px;background:#ECE9D8;border-right:1px solid #000;box-shadow:inset 0 1px 0 #fff,inset 0 -1px 0 #D8F0D8"></div>
<div class="a" style="left:8px;top:743px;width:117px;height:17px;border-top:1px solid #A0A0A0;border-left:1px solid #A0A0A0"></div>
<div class="t" style="left:12px;top:746px;font-size:12px">Stopped</div>
<div class="a" style="left:128px;top:743px;width:100px;height:17px;border-top:1px solid #A0A0A0;border-left:1px solid #A0A0A0"></div>
<div class="t" style="left:132px;top:746px;font-size:12px">Real Time</div>
<div class="a" style="left:231px;top:743px;width:71px;height:17px;border-top:1px solid #A0A0A0;border-left:1px solid #A0A0A0"></div>
<div class="t" style="left:235px;top:746px;font-size:12px">48000 Hz</div>
<div class="a" style="left:304px;top:743px;width:51px;height:17px;border-top:1px solid #A0A0A0;border-left:1px solid #A0A0A0"></div>
<div class="t" style="left:308px;top:746px;font-size:12px">16 Bit</div>
<div class="a" style="left:357px;top:743px;width:61px;height:17px;border-top:1px solid #A0A0A0;border-left:1px solid #A0A0A0"></div>
<div class="t" style="left:361px;top:746px;font-size:12px">Mono</div>
<div class="a" style="left:420px;top:743px;width:100px;height:17px;border-top:1px solid #A0A0A0;border-left:1px solid #A0A0A0"></div>
<div class="t" style="left:424px;top:746px;font-size:12px">FFT: 65536 pts</div>
<div class="a" style="left:523px;top:743px;width:73px;height:17px;border-top:1px solid #A0A0A0;border-left:1px solid #A0A0A0"></div>
<div class="t" style="left:527px;top:746px;font-size:12px">Hanning</div>
</body></html>
